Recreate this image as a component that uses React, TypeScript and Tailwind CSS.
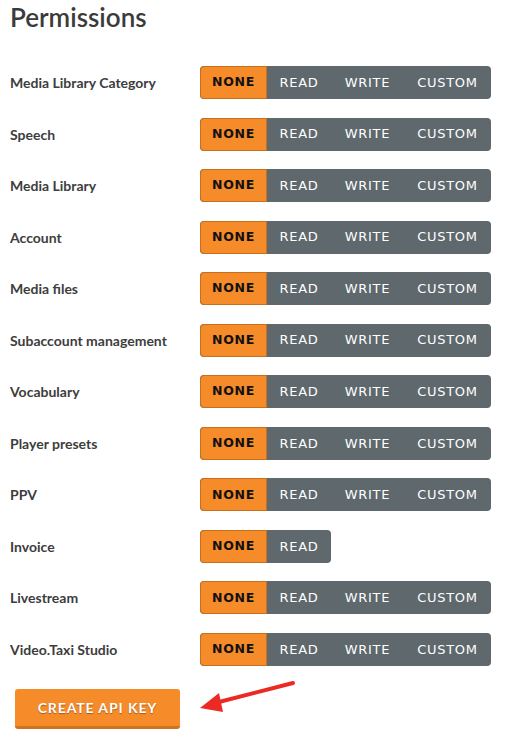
import React from "react";

const rows: { label: string; opts: string[] }[] = [
  { label: "Media Library Category", opts: ["NONE", "READ", "WRITE", "CUSTOM"] },
  { label: "Speech", opts: ["NONE", "READ", "WRITE", "CUSTOM"] },
  { label: "Media Library", opts: ["NONE", "READ", "WRITE", "CUSTOM"] },
  { label: "Account", opts: ["NONE", "READ", "WRITE", "CUSTOM"] },
  { label: "Media files", opts: ["NONE", "READ", "WRITE", "CUSTOM"] },
  { label: "Subaccount management", opts: ["NONE", "READ", "WRITE", "CUSTOM"] },
  { label: "Vocabulary", opts: ["NONE", "READ", "WRITE", "CUSTOM"] },
  { label: "Player presets", opts: ["NONE", "READ", "WRITE", "CUSTOM"] },
  { label: "PPV", opts: ["NONE", "READ", "WRITE", "CUSTOM"] },
  { label: "Invoice", opts: ["NONE", "READ"] },
  { label: "Livestream", opts: ["NONE", "READ", "WRITE", "CUSTOM"] },
  { label: "Video.Taxi Studio", opts: ["NONE", "READ", "WRITE", "CUSTOM"] },
];

const widths: Record<string, string> = {
  NONE: "w-[67px]",
  READ: "w-[64px]",
  WRITE: "w-[73px]",
  CUSTOM: "w-[87px]",
};

const Segmented = ({ opts }: { opts: string[] }) => (
  <div className="flex h-[33px] rounded-[4px] bg-[#5e686d] overflow-hidden font-['DejaVu_Sans',sans-serif] text-[13px] tracking-[0.7px]">
    {opts.map((o) =>
      o === "NONE" ? (
        <div
          key={o}
          className={`${widths[o]} flex items-center justify-center bg-[#f68b29] border border-[#c96e1c] rounded-l-[4px] font-bold text-[#111] text-[12.5px]`}
        >
          {o}
        </div>
      ) : (
        <div key={o} className={`${widths[o]} flex items-center justify-center text-white`}>
          {o}
        </div>
      )
    )}
  </div>
);

export default function App() {
  return (
    <div className="relative w-[507px] h-[745px] bg-white pl-[10px] font-['Lato',sans-serif] text-[#3b3b3b]">
      <h1 className="pt-[2px] text-[26px] leading-[30px] font-semibold">Permissions</h1>
      <div className="mt-[34px] flex flex-col gap-[18.55px]">
        {rows.map((r) => (
          <div key={r.label} className="flex items-center">
            <div className="w-[190px] text-[14px] font-bold text-[#3d3d3d]">{r.label}</div>
            <Segmented opts={r.opts} />
          </div>
        ))}
      </div>
      <button className="mt-[23px] ml-[5px] w-[165px] h-[40px] rounded-[3px] bg-[#f68b29] border-b-[3px] border-[#d1721d] text-white font-bold text-[14px] tracking-[0.9px] [text-shadow:0_1px_1px_rgba(0,0,0,0.35)]">
        CREATE API KEY
      </button>
      <svg className="absolute left-[195px] top-[676px]" width="105" height="40" viewBox="0 0 105 40">
        <line x1="98" y1="7" x2="20" y2="27" stroke="#ec2a24" strokeWidth="4" strokeLinecap="round" />
        <polygon points="5,32 24,17 28,36" fill="#ec2a24" />
      </svg>
    </div>
  );
}
